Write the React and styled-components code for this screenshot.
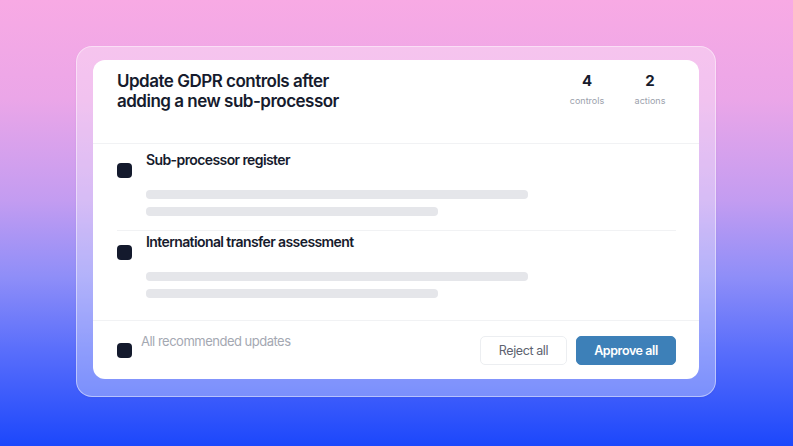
import React from "react";
import styled, { createGlobalStyle } from "styled-components";

const GlobalStyle = createGlobalStyle`
  html, body {
    margin: 0;
    padding: 0;
  }
  body {
    font-family: Inter, "Noto Sans", "Liberation Sans", sans-serif;
    -webkit-font-smoothing: antialiased;
  }
  * {
    box-sizing: border-box;
  }
`;

const Page = styled.div`
  width: 793px;
  height: 446px;
  padding: 46px 0 0 76px;
  display: flex;
  align-items: flex-start;
  background: linear-gradient(
    180deg,
    #f8aae4 0%,
    #eba6e8 22%,
    #c39cf1 45%,
    #8f8ef8 62%,
    #5b6ffb 78%,
    #1c47fb 100%
  );
  overflow: hidden;
`;

const Frame = styled.div`
  width: 640px;
  height: 351px;
  padding: 14px 17px 18px;
  border-radius: 16px;
  background: rgba(255, 255, 255, 0.32);
  border: 1px solid rgba(255, 255, 255, 0.45);
  box-shadow: 0 1px 2px rgba(60, 40, 140, 0.08);
`;

const Card = styled.div`
  width: 606px;
  height: 319px;
  margin-left: -1px;
  margin-top: -1px;
  background: #ffffff;
  border-radius: 12px;
  display: flex;
  flex-direction: column;
  overflow: hidden;
`;

const Header = styled.div`
  height: 84px;
  padding: 11px 24px 0;
  display: flex;
  justify-content: space-between;
  align-items: flex-start;
  border-bottom: 1px solid #f1f2f4;
  flex-shrink: 0;
`;

const Title = styled.h1`
  margin: 0;
  font-size: 17px;
  line-height: 20px;
  font-weight: 600;
  color: #161b2d;
  letter-spacing: -0.5px;
`;

const Stats = styled.div`
  display: flex;
  gap: 13px;
  padding-top: 1px;
`;

const Stat = styled.div`
  width: 50px;
  display: flex;
  flex-direction: column;
  align-items: center;
`;

const StatValue = styled.div`
  font-size: 15px;
  line-height: 18px;
  font-weight: 700;
  color: #161b2d;
`;

const StatLabel = styled.div`
  margin-top: 5px;
  font-size: 9px;
  line-height: 11px;
  color: #9ca1ac;
`;

const List = styled.div`
  padding: 5px 23px 8px 24px;
  border-bottom: 1px solid #f1f2f4;
  flex-shrink: 0;
`;

const Item = styled.div`
  display: flex;
  gap: 14px;
  padding: 1px 0 14px;
  border-bottom: ${(p) => (p.$last ? "none" : "1px solid #f1f2f4")};
`;

const Checkbox = styled.div`
  width: 15px;
  height: 15px;
  border-radius: 4px;
  background: #141a2d;
  flex-shrink: 0;
  margin-top: ${(p) => p.$offset}px;
`;

const ItemBody = styled.div`
  display: flex;
  flex-direction: column;
`;

const ItemTitle = styled.div`
  font-size: 14px;
  line-height: 20px;
  font-weight: 600;
  color: #161b2d;
  letter-spacing: -0.6px;
  margin-bottom: 20px;
`;

const Bar = styled.div`
  width: ${(p) => p.$w}px;
  height: 9px;
  border-radius: 4px;
  background: #e5e6ea;
  & + & {
    margin-top: 8px;
  }
`;

const Footer = styled.div`
  flex: 1;
  padding: 0 23px 0 24px;
  display: flex;
  justify-content: space-between;
  align-items: flex-start;
`;

const SelectAll = styled.div`
  display: flex;
  gap: 9px;
  align-items: flex-start;
`;

const SelectLabel = styled.div`
  margin-top: 12px;
  font-size: 13px;
  line-height: 17px;
  letter-spacing: -0.5px;
  color: #a4a8b2;
`;

const Actions = styled.div`
  display: flex;
  gap: 9px;
  margin-top: 15px;
`;

const Button = styled.button`
  height: 29px;
  width: ${(p) => p.$w}px;
  padding: 0;
  border-radius: 5px;
  font-family: inherit;
  font-size: 12.5px;
  letter-spacing: -0.4px;
  font-weight: ${(p) => (p.$primary ? 600 : 400)};
  cursor: pointer;
  border: 1px solid ${(p) => (p.$primary ? "#3d80b8" : "#eceef1")};
  background: ${(p) => (p.$primary ? "#3d80b8" : "#ffffff")};
  color: ${(p) => (p.$primary ? "#ffffff" : "#5d6270")};
`;

const items = [
  { title: "Sub-processor register" },
  { title: "International transfer assessment" },
];

export default function App() {
  return (
    <>
      <GlobalStyle />
      <Page>
        <Frame>
          <Card>
            <Header>
              <Title>
                Update GDPR controls after
                <br />
                adding a new sub-processor
              </Title>
              <Stats>
                <Stat>
                  <StatValue>4</StatValue>
                  <StatLabel>controls</StatLabel>
                </Stat>
                <Stat>
                  <StatValue>2</StatValue>
                  <StatLabel>actions</StatLabel>
                </Stat>
              </Stats>
            </Header>
            <List>
              {items.map((item, i) => (
                <Item key={item.title} $last={i === items.length - 1}>
                  <Checkbox $offset={13} />
                  <ItemBody>
                    <ItemTitle>{item.title}</ItemTitle>
                    <Bar $w={382} />
                    <Bar $w={292} />
                  </ItemBody>
                </Item>
              ))}
            </List>
            <Footer>
              <SelectAll>
                <Checkbox $offset={22} />
                <SelectLabel>All recommended updates</SelectLabel>
              </SelectAll>
              <Actions>
                <Button $w={87}>Reject all</Button>
                <Button $w={100} $primary>
                  Approve all
                </Button>
              </Actions>
            </Footer>
          </Card>
        </Frame>
      </Page>
    </>
  );
}
